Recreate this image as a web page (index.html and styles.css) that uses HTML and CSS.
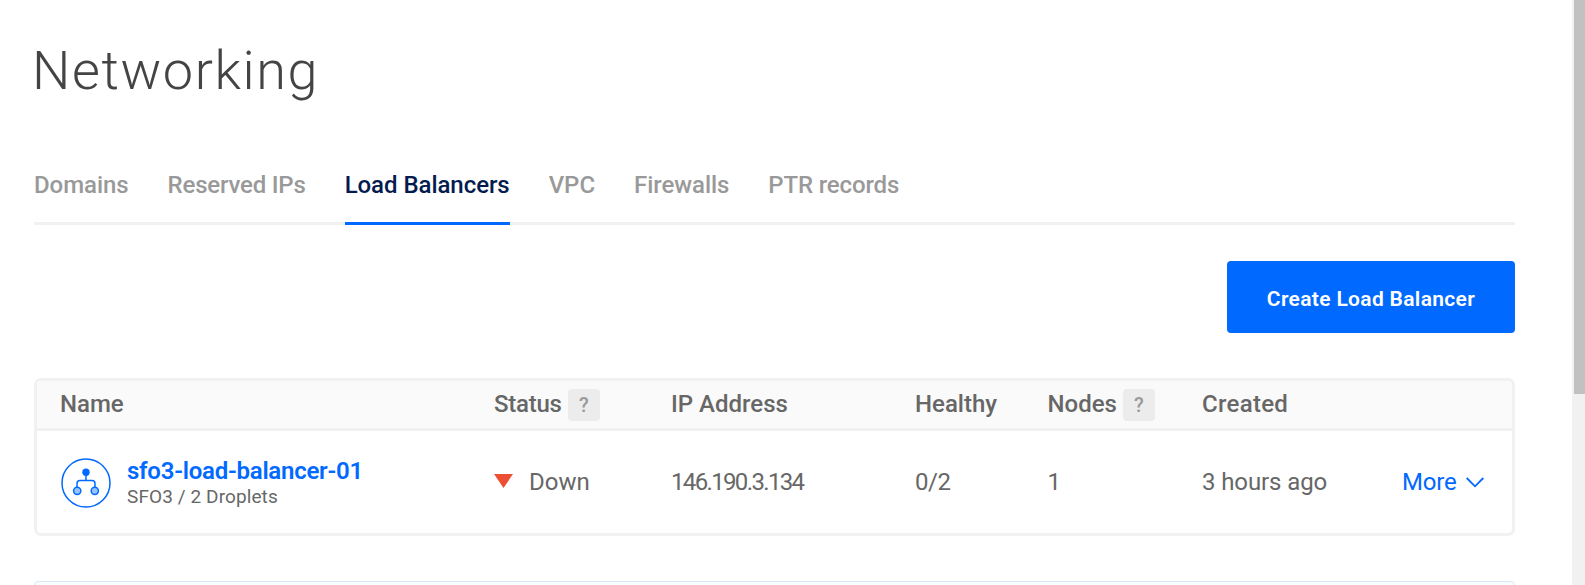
FILE: index.html
```html
<!DOCTYPE html>
<html lang="en">
<head>
<meta charset="utf-8">
<title>Networking</title>
<link rel="stylesheet" href="styles.css">
</head>
<body>
<div class="page">
  <main class="content">
    <h1 class="title">Networking</h1>
    <nav class="tabs">
      <a class="tab">Domains</a>
      <a class="tab tab-reserved">Reserved IPs</a>
      <a class="tab active">Load Balancers</a>
      <a class="tab">VPC</a>
      <a class="tab">Firewalls</a>
      <a class="tab tab-ptr">PTR records</a>
    </nav>
    <div class="actions"><button class="create">Create Load Balancer</button></div>
    <section class="table">
      <div class="row head">
        <span>Name</span>
        <span class="with-help status-head">Status<i class="help">?</i></span>
        <span>IP Address</span>
        <span>Healthy</span>
        <span class="with-help">Nodes<i class="help">?</i></span>
        <span class="created">Created</span>
        <span></span>
      </div>
      <div class="row body">
        <div class="name">
          <svg class="icon" viewBox="0 0 50 50" fill="none" stroke="#0069ff" stroke-width="1.5">
            <circle cx="25" cy="25" r="24"/>
            <circle cx="25" cy="14.3" r="3.7" fill="#0069ff" stroke="none"/>
            <path d="M25 16v6.5M16 29v-3.5a3 3 0 0 1 3-3h12a3 3 0 0 1 3 3V29"/>
            <circle cx="16.2" cy="32.8" r="3.6" fill="#99c3ff"/>
            <circle cx="33.8" cy="32.8" r="3.6" fill="#99c3ff"/>
          </svg>
          <div class="name-text">
            <a class="link">sfo3-load-balancer-01</a>
            <span class="sub">SFO3 / 2 Droplets</span>
          </div>
        </div>
        <div class="status"><svg class="down" viewBox="0 0 19 14"><path d="M0 0h19L9.5 14z" fill="#ed4f32"/></svg>Down</div>
        <span class="ip">146.190.3.134</span>
        <span class="healthy">0/2</span>
        <span>1</span>
        <span class="age">3 hours ago</span>
        <a class="more">More<svg class="chevron" viewBox="0 0 18 11" fill="none" stroke="#0069ff" stroke-width="1.8"><path d="M.7 1 9 9.3 17.3 1"/></svg></a>
      </div>
    </section>
    <section class="notice"></section>
  </main>
  <div class="scrollbar"><div class="thumb"></div></div>
</div>
</body>
</html>
```
FILE: styles.css
```css
* { box-sizing: border-box; }
body {
  margin: 0;
  background: #fff;
  color: #676767;
  font: 24px/30px Roboto, "Liberation Sans", sans-serif;
}
.page {
  display: flex;
  justify-content: space-between;
  height: 585px;
  overflow: hidden;
}
.content { width: 1481px; margin-left: 34px; }
.title {
  margin: 38px 0 0;
  color: #444;
  font-size: 54px;
  font-weight: 300;
  line-height: 66px;
  letter-spacing: 1.6px;
  text-indent: -2px;
}
.tabs {
  display: flex;
  gap: 39px;
  box-sizing: content-box;
  height: 52px;
  margin-top: 57px;
  padding-top: 9px;
  border-bottom: 3px solid #f1f1f1;
}
.tab {
  height: 55px;
  color: #999;
  font-weight: 500;
  line-height: 30px;
  letter-spacing: -.05px;
}
.tab-reserved { letter-spacing: -.2px; }
.tab-ptr { letter-spacing: -.15px; }
.active { color: #031b4e; border-bottom: 3px solid #0069ff; }
.actions { display: flex; justify-content: flex-end; margin-top: 36px; }
.create {
  width: 288px;
  height: 72px;
  padding: 4px 0 0;
  border: 0;
  border-radius: 4px;
  background: #0069ff;
  color: #fff;
  font: 600 21px/24px Roboto, "Liberation Sans", sans-serif;
  letter-spacing: .33px;
}
.table {
  margin-top: 45px;
  border: 3px solid #f1f1f1;
  border-radius: 7px;
}
.row {
  display: grid;
  grid-template-columns: 434px 177px 244px 132.5px 154.5px 200px auto;
  align-items: center;
  padding-left: 23px;
}
.head {
  height: 50px;
  padding-bottom: 1px;
  border-bottom: 3px solid #f1f1f1;
  border-radius: 4px 4px 0 0;
  background: #fafafa;
  font-weight: 500;
}
.created { letter-spacing: .3px; }
.with-help { display: flex; align-items: center; gap: 6px; }
.status-head { letter-spacing: -.25px; }
.help {
  position: relative;
  top: .5px;
  width: 32px;
  height: 32px;
  border-radius: 4px;
  background: #ececec;
  color: #999;
  font: 500 20px/32px Roboto, "Liberation Sans", sans-serif;
  text-align: center;
}
.body { height: 102px; }
.name { display: flex; align-items: center; gap: 16px; padding-left: 1px; }
.icon { width: 50px; height: 50px; margin-top: 2px; }
.name-text { display: flex; flex-direction: column; padding-top: 1px; }
.link {
  color: #0069ff;
  font-weight: 600;
  line-height: 28px;
  letter-spacing: -.25px;
}
.sub { font-size: 19px; line-height: 24px; letter-spacing: .1px; }
.status { display: flex; align-items: center; gap: 16px; }
.down { width: 19px; height: 14px; margin-top: -3px; }
.ip { letter-spacing: -1.65px; }
.healthy { letter-spacing: -.5px; }
.age { letter-spacing: -.1px; }
.more { display: flex; align-items: center; gap: 10px; color: #0069ff; letter-spacing: -.2px; }
.chevron { width: 18px; height: 11px; }
.notice {
  height: 20px;
  margin-top: 45px;
  border: 1px solid #dbe6f5;
  border-radius: 4px;
  background: #f7fdff;
}
.scrollbar { width: 13px; padding-left: 2px; background: #f1f1f1; }
.thumb { height: 394px; background: #c1c1c1; }
```
